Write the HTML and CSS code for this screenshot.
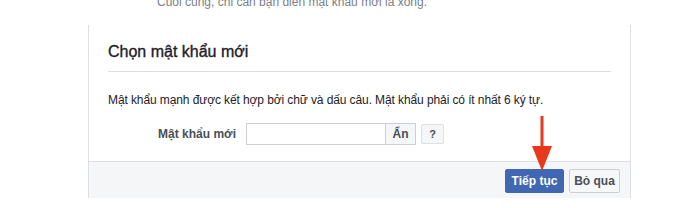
FILE: index.html
```html
<!DOCTYPE html>
<html>
<head>
  <meta charset="UTF-8">
  <title>Chọn mật khẩu mới</title>
  <link rel="stylesheet" href="styles.css">
</head>
<body>
  <div class="page">
    <div class="intro">Cuối cùng, chỉ cần bạn điền mật khẩu mới là xong.</div>

    <div class="card">
      <div class="card-title">Chọn mật khẩu mới</div>

      <div class="card-body">
        <p class="hint">Mật khẩu mạnh được kết hợp bởi chữ và dấu câu. Mật khẩu phải có ít nhất 6 ký tự.</p>

        <div class="form-row">
          <label class="form-label" for="newPassword">Mật khẩu mới</label>
          <input type="password" id="newPassword" class="form-input">
          <button class="toggle-button">Ẩn</button>
          <button class="help-button">?</button>
        </div>
      </div>

      <div class="card-footer">
        <button class="button button-primary">Tiếp tục</button>
        <button class="button button-secondary">Bỏ qua</button>
      </div>
    </div>

    <!-- mũi tên đỏ chỉ vào nút Tiếp tục -->
    <svg class="arrow" width="24" height="56" viewBox="0 0 24 56">
      <rect x="10.5" y="0" width="3" height="32" fill="#e8391d"/>
      <polygon points="2,30 22,30 12,55" fill="#e8391d"/>
    </svg>
  </div>
</body>
</html>
```

FILE: styles.css
```css
body {
  margin: 0;
  padding: 0;
  background-color: white;
  font-family: "Liberation Sans", Arial, Helvetica, sans-serif;
  color: #1d2129;
}

.page {
  position: relative;
  width: 700px;
  height: 208px;
  overflow: hidden;
}

.intro {
  margin-top: -6px;
  padding-left: 157px;
  font-size: 12px;
  line-height: 16px;
  color: #7a7f87;
}

.card {
  margin-top: 15px;
  margin-left: 88px;
  width: 541px;
  border-left: 1px solid #dddfe2;
  border-right: 1px solid #dddfe2;
}

.card-title {
  margin: 0 19px;
  padding: 17px 0 9px;
  font-size: 16px;
  line-height: 20px;
  font-weight: normal;
  -webkit-text-stroke: 0.35px #1d2129;
  color: #1d2129;
  border-bottom: 1px solid #dadde1;
}

.card-body {
  padding: 20px 19px 16px;
}

.hint {
  margin: 0;
  font-size: 12px;
  line-height: 16px;
  letter-spacing: -0.1px;
}

.form-row {
  display: flex;
  align-items: center;
  margin-top: 15px;
  height: 22px;
}

.form-label {
  width: 128px;
  margin-right: 10px;
  text-align: right;
  font-size: 12px;
  font-weight: bold;
  color: #4b4f56;
}

.form-input {
  width: 139px;
  height: 22px;
  padding: 0 4px;
  box-sizing: border-box;
  border: 1px solid #ccd0d5;
  border-right: none;
  background-color: white;
}

.toggle-button {
  width: 31px;
  height: 22px;
  padding: 0;
  border: 1px solid #ccd0d5;
  background-color: #f5f6f7;
  font-family: inherit;
  font-size: 12px;
  font-weight: bold;
  color: #4b4f56;
}

.help-button {
  width: 23px;
  height: 20px;
  margin-left: 5px;
  padding: 0;
  border: 1px solid #dddfe2;
  border-radius: 2px;
  background-color: #f5f6f7;
  font-family: inherit;
  font-size: 11px;
  font-weight: bold;
  color: #4b4f56;
}

.card-footer {
  display: flex;
  justify-content: flex-end;
  gap: 5px;
  padding: 7px 10px 5px;
  border-top: 1px solid #dddfe2;
  background-color: #f5f6f7;
}

.button {
  height: 24px;
  padding: 0;
  border-radius: 2px;
  font-family: inherit;
  font-size: 12px;
  font-weight: bold;
  white-space: nowrap;
}

.button-primary {
  width: 59px;
  background-color: #4267b2;
  border: 1px solid #4267b2;
  color: white;
}

.button-secondary {
  width: 51px;
  background-color: #f6f7f9;
  border: 1px solid #ced0d4;
  color: #4b4f56;
}

.arrow {
  position: absolute;
  left: 530px;
  top: 116px;
}
```
